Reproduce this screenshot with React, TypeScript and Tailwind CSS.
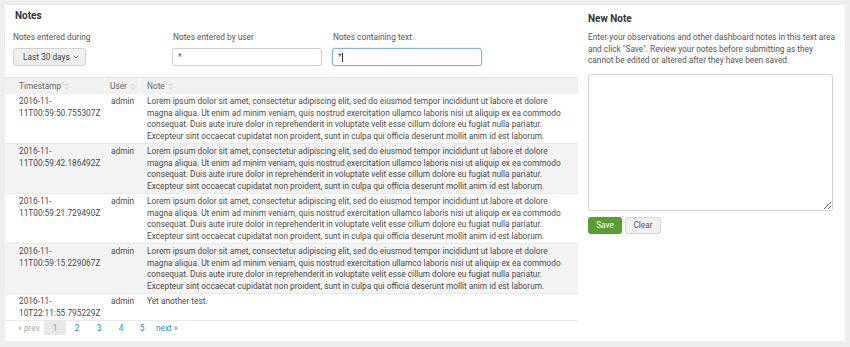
import React from "react";

const lorem = [
  "Lorem ipsum dolor sit amet, consectetur adipiscing elit, sed do eiusmod tempor incididunt ut labore et dolore",
  "magna aliqua. Ut enim ad minim veniam, quis nostrud exercitation ullamco laboris nisi ut aliquip ex ea commodo",
  "consequat. Duis aute irure dolor in reprehenderit in voluptate velit esse cillum dolore eu fugiat nulla pariatur.",
  "Excepteur sint occaecat cupidatat non proident, sunt in culpa qui officia deserunt mollit anim id est laborum.",
];

const rows = [
  { ts: "11T00:59:50.755307Z", note: lorem },
  { ts: "11T00:59:42.186492Z", note: lorem },
  { ts: "11T00:59:21.729490Z", note: lorem },
  { ts: "11T00:59:15.229067Z", note: lorem },
  { ts: "10T22:11:55.795229Z", note: ["Yet another test."] },
];

function SortIcon() {
  return (
    <svg width="5" height="7" viewBox="0 0 5 7" className="ml-[3px] inline-block">
      <path d="M0.8 2.6 L2.5 1 L4.2 2.6" fill="none" stroke="#c4c4c4" strokeWidth="0.8" />
      <path d="M0.8 4.4 L2.5 6 L4.2 4.4" fill="none" stroke="#c4c4c4" strokeWidth="0.8" />
    </svg>
  );
}

export default function App() {
  return (
    <div className="w-[850px] h-[347px] bg-[#eeeeee] p-[5px] font-['Roboto',sans-serif] text-[8.3px] text-[#4a4a4a]">
      <div className="flex bg-white h-[336px]">
        {/* Left panel */}
        <div className="w-[573px] flex flex-col">
          <div className="pl-[10px] pt-[5px] h-[17px] leading-[12px] text-[10px] font-bold text-[#333]">Notes</div>
          <div className="flex mt-[10px] pl-[8px]">
            <div className="w-[159px] flex flex-col">
              <div className="leading-[11px] h-[11px] text-[#555]">Notes entered during</div>
              <div className="mt-[5px] w-[73px] h-[18px] flex items-center pl-[9px] rounded-[3px] border border-[#d0d0d0] bg-[#efefef] text-[#444]">
                Last 30 days
                <svg width="6" height="4" viewBox="0 0 6 4" className="ml-[3px]">
                  <path d="M0.6 0.7 L3 3.1 L5.4 0.7" fill="none" stroke="#555" strokeWidth="0.9" />
                </svg>
              </div>
            </div>
            <div className="w-[160px] flex flex-col">
              <div className="leading-[11px] h-[11px] pl-[1px] text-[#555]">Notes entered by user</div>
              <div className="mt-[5px] w-[150px] h-[18px] flex items-center pl-[5px] rounded-[3px] border border-[#cfcfcf] bg-white text-[#555]">*</div>
            </div>
            <div className="w-[160px] flex flex-col">
              <div className="leading-[11px] h-[11px] pl-[1px] text-[#555]">Notes containing text</div>
              <div className="mt-[5px] w-[150px] h-[18px] flex items-center pl-[5px] rounded-[3px] border border-[#7db7e0] shadow-[0_0_2px_#a9d0ee] bg-white text-[#555]">
                *<span className="w-px h-[9px] bg-[#333] ml-[0.5px]"></span>
              </div>
            </div>
          </div>

          {/* Table */}
          <div className="mt-[11px] flex flex-col">
            <div className="flex h-[17px] bg-[#f1f1f1] border-t border-[#e2e2e2] text-[#666]">
              <div className="w-[100px] pl-[14px] flex items-center border-r border-white">Timestamp<SortIcon /></div>
              <div className="w-[35px] pl-[5px] flex items-center border-r border-white">User<SortIcon /></div>
              <div className="flex-1 pl-[7px] flex items-center">Note<SortIcon /></div>
            </div>
            {rows.map((r, i) => (
              <div
                key={i}
                className={
                  "flex pt-[2px] pb-[1px] leading-[11.5px] border-b border-[#e9e9e9] " +
                  (i % 2 === 1 ? "bg-[#f4f4f4]" : "bg-white")
                }
              >
                <div className="w-[100px] pl-[14px] whitespace-nowrap">
                  <div>2016-11-</div>
                  <div>{r.ts}</div>
                </div>
                <div className="w-[35px] pl-[6px]">admin</div>
                <div className="flex-1 pl-[7px] whitespace-nowrap">
                  {r.note.map((l, j) => (
                    <div key={j}>{l}</div>
                  ))}
                </div>
              </div>
            ))}
            <div className="flex items-center h-[14px] pl-[13px]">
              <span className="w-[26px] text-[#a8a8a8]">« prev</span>
              <span className="w-[22px] h-[14px] flex items-center justify-center bg-[#e8e8e8] text-[#999]">1</span>
              <span className="w-[22px] flex justify-center text-[#2b8fc4]">2</span>
              <span className="w-[22px] flex justify-center text-[#2b8fc4]">3</span>
              <span className="w-[22px] flex justify-center text-[#2b8fc4]">4</span>
              <span className="w-[20px] flex justify-center text-[#2b8fc4]">5</span>
              <span className="pl-[4px] text-[#2b8fc4]">next »</span>
            </div>
          </div>
        </div>

        {/* Right panel */}
        <div className="w-[265px] pl-[10px] flex flex-col">
          <div className="pt-[8px] h-[20px] leading-[12px] text-[10px] font-bold text-[#333]">New Note</div>
          <div className="mt-[7px] leading-[11.5px] text-[#555] whitespace-nowrap">
            <div>Enter your observations and other dashboard notes in this text area</div>
            <div>and click "Save". Review your notes before submitting as they</div>
            <div>cannot be edited or altered after they have been saved.</div>
          </div>
          <textarea className="mt-[7px] w-[245px] h-[137px] border border-[#d2d2d2] rounded-[3px] bg-white outline-none" />
          <div className="flex mt-[6px] gap-[3px]">
            <div className="w-[34px] h-[17px] flex items-center justify-center rounded-[3px] bg-[#5a9e32] text-white">Save</div>
            <div className="w-[36px] h-[17px] flex items-center justify-center rounded-[3px] bg-[#f1f1f1] border border-[#d6d6d6] text-[#555]">Clear</div>
          </div>
        </div>
      </div>
    </div>
  );
}
